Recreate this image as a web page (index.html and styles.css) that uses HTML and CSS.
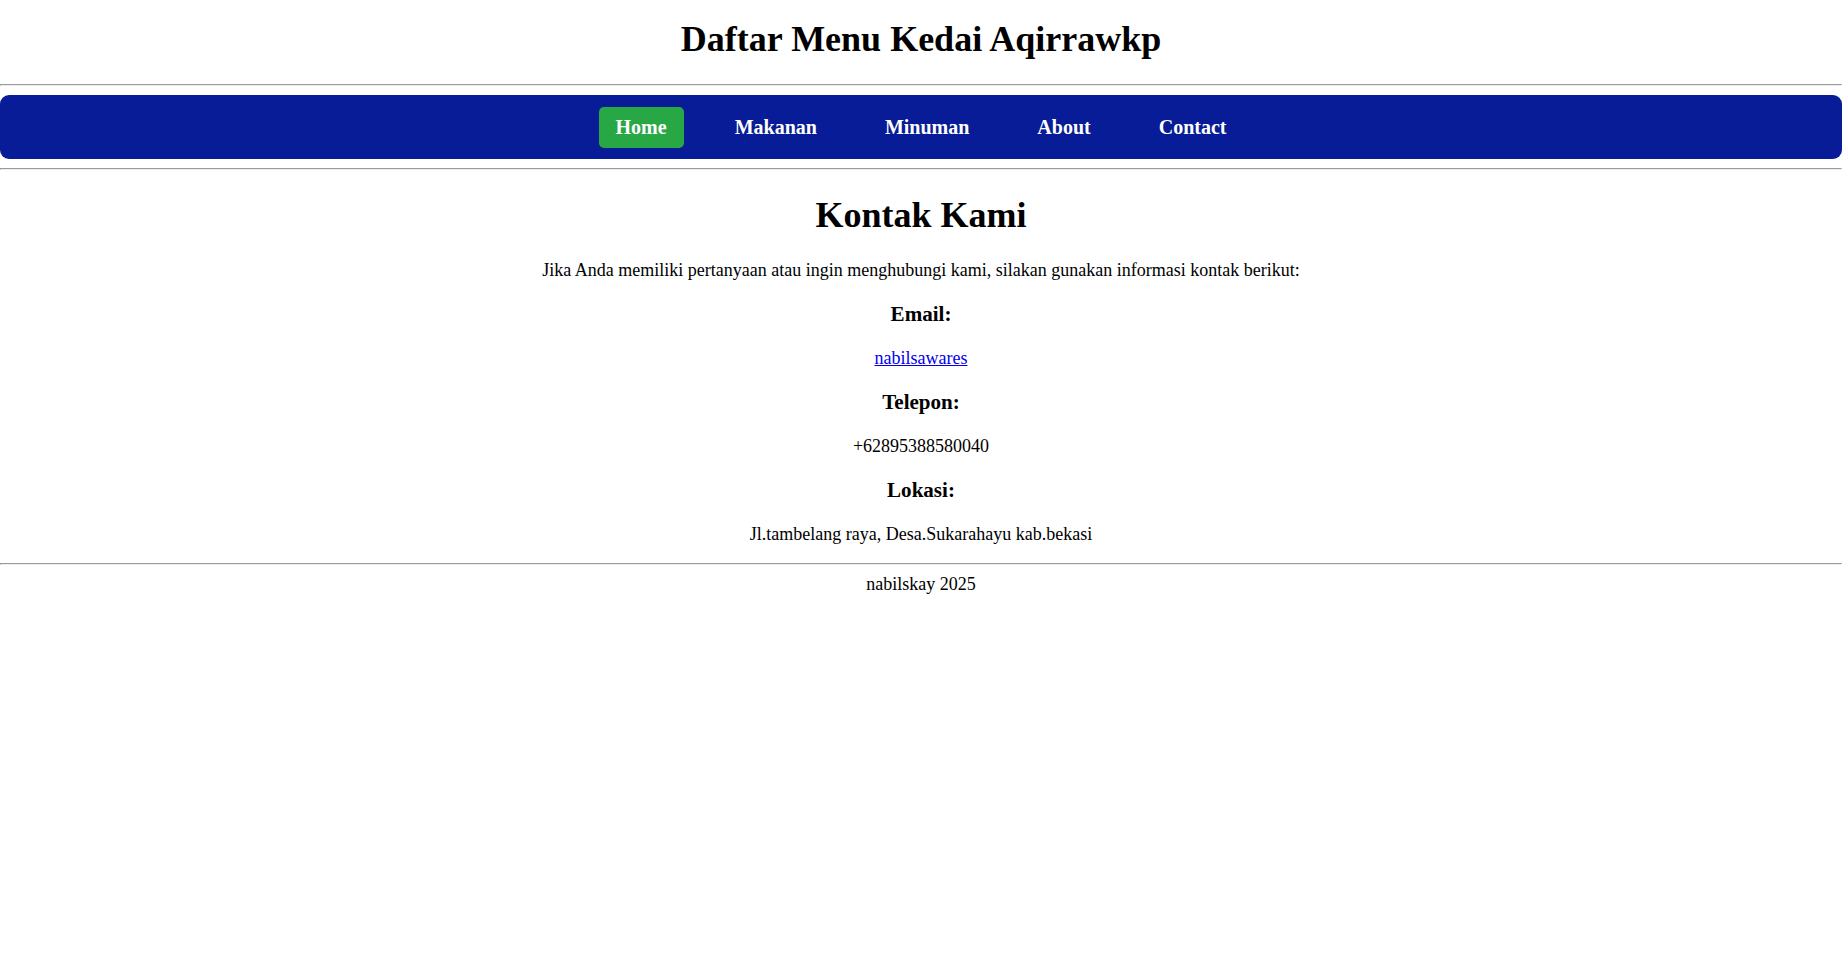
FILE: index.html
```html
<!DOCTYPE html>
<html lang="id">
<head>
<meta charset="utf-8">
<title>Kontak - Kedai Aqirrawkp</title>
<link rel="stylesheet" href="styles.css">
</head>
<body>
<header class="site-header">
  <h1 class="site-title">Daftar Menu Kedai Aqirrawkp</h1>
</header>
<hr>
<nav class="main-nav">
  <a class="nav-link active" href="#">Home</a>
  <a class="nav-link" href="#">Makanan</a>
  <a class="nav-link" href="#">Minuman</a>
  <a class="nav-link" href="#">About</a>
  <a class="nav-link" href="#">Contact</a>
</nav>
<hr>
<main class="contact">
  <h1 class="contact-title">Kontak Kami</h1>
  <p>Jika Anda memiliki pertanyaan atau ingin menghubungi kami, silakan gunakan informasi kontak berikut:</p>
  <h3>Email:</h3>
  <p><a class="mail-link" href="#">nabilsawares</a></p>
  <h3>Telepon:</h3>
  <p>+62895388580040</p>
  <h3>Lokasi:</h3>
  <p>Jl.tambelang raya, Desa.Sukarahayu kab.bekasi</p>
</main>
<hr>
<footer class="site-footer">nabilskay 2025</footer>
</body>
</html>
```
FILE: styles.css
```css
html {
  background: #fff;
}
body {
  margin: 0;
  padding-right: 6px;
  font-family: "Liberation Serif", "Times New Roman", serif;
  font-size: 18px;
  color: #000;
  text-align: center;
}
.site-header {
  margin: 0;
}
.site-title {
  font-size: 36px;
  margin: 18px 0 24px;
}
hr {
  margin: 9px 0;
}
.main-nav {
  background: #071c96;
  border-radius: 9px;
  height: 64px;
  display: flex;
  justify-content: center;
  align-items: center;
  gap: 34px;
}
.nav-link {
  color: #fff;
  font-weight: bold;
  font-size: 20px;
  text-decoration: none;
  padding: 9px 17px;
  border-radius: 5px;
}
.nav-link.active {
  background: #28a745;
}
.contact-title {
  font-size: 36px;
  margin: 24px 0;
}
.mail-link {
  color: #0000ee;
}
.site-footer {
  margin: 0;
}
```
